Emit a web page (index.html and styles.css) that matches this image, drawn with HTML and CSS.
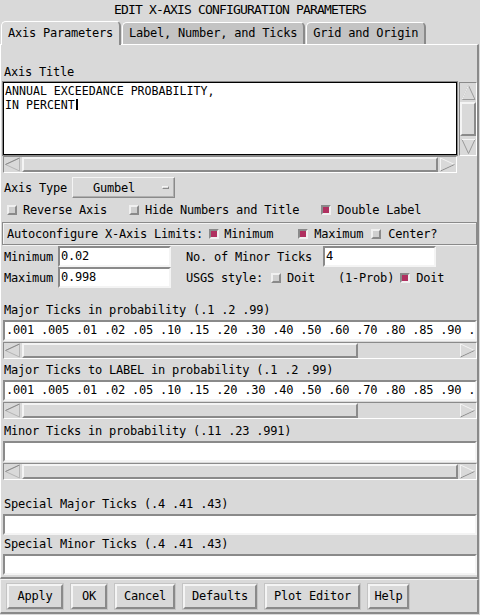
FILE: index.html
```html
<!DOCTYPE html>
<html>
<head>
<meta charset="utf-8">
<link rel="stylesheet" href="styles.css">
</head>
<body>
<div class="title">EDIT X-AXIS CONFIGURATION PARAMETERS</div>
<div class="tabs">
  <div class="tab sel">Axis Parameters</div>
  <div class="tab">Label, Number, and Ticks</div>
  <div class="tab">Grid and Origin</div>
</div>
<div class="panel">
  <div class="lbl">Axis Title</div>
  <div class="textrow">
    <div class="textarea"><div class="tline">ANNUAL EXCEEDANCE PROBABILITY,</div><div class="tline">IN PERCENT<span class="cursor"></span></div></div>
    <div class="vscroll">
      <span class="varr"><svg width="15" height="17" viewBox="0 0 15 17"><polygon points="7.5,1.5 14,15.5 1,15.5" fill="#d9d9d9" stroke="#9a9a9a"/><line x1="7.5" y1="1.5" x2="1" y2="15.5" stroke="#f4f4f4"/></svg></span>
      <div class="vtrough"><div class="vslider"></div></div>
      <span class="varr"><svg width="15" height="17" viewBox="0 0 15 17"><polygon points="1,1.5 14,1.5 7.5,15.5" fill="#d9d9d9" stroke="#9a9a9a"/><line x1="1" y1="1.5" x2="14" y2="1.5" stroke="#f4f4f4"/></svg></span>
    </div>
  </div>
  <div class="hscroll short">
    <span class="harr"><svg width="17" height="15" viewBox="0 0 17 15"><polygon points="1.5,7.5 15.5,1 15.5,14" fill="#d9d9d9" stroke="#b4b4b4"/><line x1="1.5" y1="7.5" x2="15.5" y2="1" stroke="#8a8a8a"/></svg></span>
    <div class="trough"><div class="slider full"></div></div>
    <span class="harr"><svg width="17" height="15" viewBox="0 0 17 15"><polygon points="15.5,7.5 1.5,1 1.5,14" fill="#d9d9d9" stroke="#f4f4f4"/><line x1="15.5" y1="7.5" x2="1.5" y2="14" stroke="#8a8a8a"/></svg></span>
  </div>

  <div class="row axisrow">
    <span class="rlabel">Axis Type</span>
    <div class="menubtn"><span>Gumbel</span><span class="ind"></span></div>
  </div>

  <div class="row checks">
    <span class="cb"></span><span class="ctext">Reverse Axis</span>
    <span class="cb sp22"></span><span class="ctext">Hide Numbers and Title</span>
    <span class="cb on sp22"></span><span class="ctext">Double Label</span>
  </div>

  <div class="autoframe">
    <span>Autoconfigure X-Axis Limits:</span>
    <span class="cb on m6"></span><span class="ctext g5">Minimum</span>
    <span class="cb on m25"></span><span class="ctext">Maximum</span>
    <span class="cb m8"></span><span class="ctext g7">Center?</span>
  </div>

  <div class="row minrow">
    <span class="rlabel w57">Minimum</span>
    <div class="entry small">0.02</div>
    <span class="rlabel mid">No. of Minor Ticks</span>
    <div class="entry small">4</div>
  </div>
  <div class="row maxrow">
    <span class="rlabel w57">Maximum</span>
    <div class="entry small">0.998</div>
    <span class="rlabel usgs">USGS style:</span>
    <span class="cb m8"></span><span class="ctext">Doit</span>
    <span class="prob">(1-Prob)</span>
    <span class="cb on m6"></span><span class="ctext">Doit</span>
  </div>

  <div class="lbl l1">Major Ticks in probability (.1 .2 .99)</div>
  <div class="entry wide">.001 .005 .01 .02 .05 .10 .15 .20 .30 .40 .50 .60 .70 .80 .85 .90 .</div>
  <div class="hscroll">
    <span class="harr"><svg width="17" height="15" viewBox="0 0 17 15"><polygon points="1.5,7.5 15.5,1 15.5,14" fill="#d9d9d9" stroke="#b4b4b4"/><line x1="1.5" y1="7.5" x2="15.5" y2="1" stroke="#8a8a8a"/></svg></span>
    <div class="trough"><div class="slider" style="width:336px"></div></div>
    <span class="harr"><svg width="17" height="15" viewBox="0 0 17 15"><polygon points="15.5,7.5 1.5,1 1.5,14" fill="#d9d9d9" stroke="#f4f4f4"/><line x1="15.5" y1="7.5" x2="1.5" y2="14" stroke="#8a8a8a"/></svg></span>
  </div>

  <div class="lbl l2">Major Ticks to LABEL in probability (.1 .2 .99)</div>
  <div class="entry wide">.001 .005 .01 .02 .05 .10 .15 .20 .30 .40 .50 .60 .70 .80 .85 .90 .</div>
  <div class="hscroll">
    <span class="harr"><svg width="17" height="15" viewBox="0 0 17 15"><polygon points="1.5,7.5 15.5,1 15.5,14" fill="#d9d9d9" stroke="#b4b4b4"/><line x1="1.5" y1="7.5" x2="15.5" y2="1" stroke="#8a8a8a"/></svg></span>
    <div class="trough"><div class="slider" style="width:336px"></div></div>
    <span class="harr"><svg width="17" height="15" viewBox="0 0 17 15"><polygon points="15.5,7.5 1.5,1 1.5,14" fill="#d9d9d9" stroke="#f4f4f4"/><line x1="15.5" y1="7.5" x2="1.5" y2="14" stroke="#8a8a8a"/></svg></span>
  </div>

  <div class="lbl l3">Minor Ticks in probability (.11 .23 .991)</div>
  <div class="entry wide"></div>
  <div class="hscroll">
    <span class="harr"><svg width="17" height="15" viewBox="0 0 17 15"><polygon points="1.5,7.5 15.5,1 15.5,14" fill="#d9d9d9" stroke="#b4b4b4"/><line x1="1.5" y1="7.5" x2="15.5" y2="1" stroke="#8a8a8a"/></svg></span>
    <div class="trough"><div class="slider full"></div></div>
    <span class="harr"><svg width="17" height="15" viewBox="0 0 17 15"><polygon points="15.5,7.5 1.5,1 1.5,14" fill="#d9d9d9" stroke="#f4f4f4"/><line x1="15.5" y1="7.5" x2="1.5" y2="14" stroke="#8a8a8a"/></svg></span>
  </div>

  <div class="lbl l4">Special Major Ticks (.4 .41 .43)</div>
  <div class="entry wide"></div>
  <div class="lbl l5">Special Minor Ticks (.4 .41 .43)</div>
  <div class="entry wide"></div>
</div>
<div class="buttonbar">
  <div class="btn b-apply">Apply</div>
  <div class="btn b-ok">OK</div>
  <div class="btn b-cancel">Cancel</div>
  <div class="btn b-def">Defaults</div>
  <div class="btn b-plot">Plot Editor</div>
  <div class="btn b-help">Help</div>
</div>
</body>
</html>
```

FILE: styles.css
```css
* { box-sizing: border-box; }
html, body { margin: 0; padding: 0; }
body {
  width: 480px;
  height: 615px;
  overflow: hidden;
  background: #d9d9d9;
  color: #000;
  font-family: "DejaVu Sans Mono", monospace;
  font-size: 12px;
  letter-spacing: -0.22px;
  line-height: 1;
}

.title {
  height: 20px;
  line-height: 20px;
  text-align: center;
  font-size: 13px;
  letter-spacing: -0.83px;
  white-space: nowrap;
}

.tabs {
  display: flex;
  align-items: flex-end;
  height: 24px;
  padding-left: 1px;
}
.tab {
  height: 22px;
  line-height: 21px;
  padding: 0 6px;
  margin-right: 1px;
  background: #c3c3c3;
  border-top: 1px solid #fff;
  border-left: 1px solid #fff;
  border-right: 2px solid #8a8a8a;
  border-radius: 5px 5px 0 0;
  white-space: nowrap;
}
.tab.sel {
  height: 24px;
  line-height: 23px;
  margin-bottom: -1px;
  background: #d9d9d9;
  position: relative;
  z-index: 1;
}

.panel {
  width: 479px;
  height: 535px;
  border-top: 1px solid #fff;
  border-left: 1px solid #fff;
  border-right: 2px solid #8a8a8a;
  border-bottom: 2px solid #8a8a8a;
  padding-top: 18px;
  display: flex;
  flex-direction: column;
  overflow: hidden;
}

.lbl {
  height: 19px;
  line-height: 19px;
  padding-left: 3px;
  white-space: nowrap;
  flex: none;
}
.l1 { height: 20px; line-height: 20px; margin-top: 12px; }
.l2 { height: 20px; line-height: 20px; margin-top: 1px; }
.l3 { height: 19px; line-height: 19px; margin-top: 3px; }
.l4 { margin-top: 15px; }

.textrow {
  display: flex;
  height: 74px;
  flex: none;
}
.textarea {
  margin-left: 2px;
  width: 454px;
  height: 73px;
  background: #fff;
  border: 1px solid #000;
  box-shadow: 0 0 0 1px #8a8a8a;
  padding: 2px 0 0 1px;
  font-size: 11.6px;
  letter-spacing: 0px;
  white-space: nowrap;
}
.tline { height: 13.5px; line-height: 13.5px; }
.cursor {
  display: inline-block;
  width: 2px;
  height: 11px;
  background: #000;
  vertical-align: -1px;
  margin-left: 1px;
}

.vscroll {
  margin-left: 2px;
  width: 18px;
  height: 74px;
  display: flex;
  flex-direction: column;
  border-left: 1px solid #8a8a8a;
  border-top: 1px solid #8a8a8a;
  border-right: 1px solid #fff;
  border-bottom: 1px solid #fff;
}
.varr {
  height: 18px;
  flex: none;
  display: flex;
  align-items: center;
  justify-content: center;
}
.vtrough { flex: 1; display: flex; padding: 1px 0; }
.vslider {
  flex: 1;
  background: #d9d9d9;
  border: 2px solid;
  border-color: #f4f4f4 #8a8a8a #8a8a8a #f4f4f4;
}

.hscroll {
  display: flex;
  height: 17px;
  margin-left: 2px;
  width: 474px;
  margin-top: 1px;
  flex: none;
  border-top: 1px solid #8a8a8a;
  border-left: 1px solid #8a8a8a;
  border-bottom: 1px solid #fff;
  border-right: 1px solid #fff;
}
.hscroll.short { width: 454px; margin-top: 0; }
.harr {
  width: 17px;
  flex: none;
  display: flex;
  align-items: center;
  justify-content: center;
}
.trough { flex: 1; display: flex; padding: 0 1px; }
.slider {
  background: #d9d9d9;
  border: 2px solid;
  border-color: #f4f4f4 #8a8a8a #8a8a8a #f4f4f4;
  flex: none;
}
.slider.full { flex: 1; }

.row {
  display: flex;
  align-items: center;
  flex: none;
  white-space: nowrap;
}
.rlabel { padding-left: 3px; }
.axisrow { height: 23px; margin-top: 3px; }
.menubtn {
  margin-left: 5px;
  width: 103px;
  height: 21px;
  display: flex;
  align-items: center;
  padding-left: 20px;
  border: 1px solid;
  border-color: #f4f4f4 #8a8a8a #8a8a8a #f4f4f4;
  box-shadow: inset -1px -1px 0 #b0b0b0;
}
.menubtn span:first-child { flex: 1; }
.ind {
  width: 7px;
  height: 3px;
  margin-right: 5px;
  border: 1px solid;
  border-color: #f4f4f4 #8a8a8a #8a8a8a #f4f4f4;
}

.checks { height: 21px; padding-left: 6px; }
.cb {
  width: 10px;
  height: 10px;
  flex: none;
  background: #cfcfcf;
  border: 2px solid;
  border-color: #f0f0f0 #8a8a8a #8a8a8a #f0f0f0;
}
.cb.on {
  background: #b03060;
  border-color: #8a8a8a #f0f0f0 #f0f0f0 #8a8a8a;
}
.ctext { margin-left: 6px; }
.sp22 { margin-left: 22px; }
.m6 { margin-left: 6px; }
.m8 { margin-left: 8px; }
.m25 { margin-left: 25px; }
.g5 { margin-left: 5px; }
.g7 { margin-left: 7px; }

.autoframe {
  margin: 2px 0 0 1px;
  width: 475px;
  height: 23px;
  flex: none;
  display: flex;
  align-items: center;
  padding-left: 4px;
  white-space: nowrap;
  border: 1px solid #8a8a8a;
  box-shadow: inset 1px 1px 0 #f4f4f4, 1px 1px 0 #f4f4f4;
}

.minrow { height: 21px; margin-top: 1px; }
.maxrow { height: 21px; }
.w57 { width: 57px; flex: none; }
.mid { margin-left: 12px; width: 140px; flex: none; }
.usgs { margin-left: 12px; }
.prob { margin-left: 23px; }

.entry {
  background: #fff;
  height: 21px;
  line-height: 17px;
  padding-left: 1px;
  border: 2px solid;
  border-color: #8a8a8a #f4f4f4 #f4f4f4 #8a8a8a;
  white-space: nowrap;
  overflow: hidden;
  flex: none;
}
.entry.small { width: 113px; }
.entry.wide { margin-left: 2px; width: 474px; }

.buttonbar {
  width: 479px;
  height: 35px;
  display: flex;
  align-items: center;
  padding-left: 6px;
  gap: 8px;
  border-top: 1px solid #f4f4f4;
  border-left: 1px solid #f4f4f4;
  border-right: 2px solid #8a8a8a;
  border-bottom: 2px solid #8a8a8a;
}
.btn {
  height: 25px;
  display: flex;
  align-items: center;
  justify-content: center;
  border: 2px solid;
  border-color: #f4f4f4 #8a8a8a #8a8a8a #f4f4f4;
  box-shadow: 0 0 0 1px #c4c4c4;
  white-space: nowrap;
  flex: none;
}
.b-apply { width: 56px; }
.b-ok { width: 36px; }
.b-cancel { width: 60px; }
.b-def { width: 74px; }
.b-plot { width: 95px; }
.b-help { width: 41px; }
```
